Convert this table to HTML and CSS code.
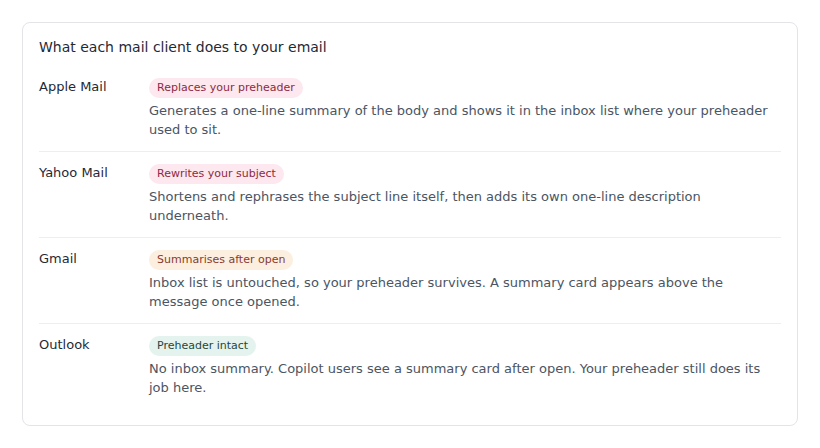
FILE: index.html
```html
<!DOCTYPE html>
<html>
<head>
<meta charset="utf-8">
<link rel="stylesheet" href="styles.css">
</head>
<body>
<div class="card">
  <div class="title">What each mail client does to your email</div>
  <div class="row">
    <div class="client">Apple Mail</div>
    <div class="info">
      <span class="badge pink">Replaces your preheader</span>
      <p class="desc">Generates a one-line summary of the body and shows it in the inbox list where your preheader used to sit.</p>
    </div>
  </div>
  <div class="row">
    <div class="client">Yahoo Mail</div>
    <div class="info">
      <span class="badge pink">Rewrites your subject</span>
      <p class="desc">Shortens and rephrases the subject line itself, then adds its own one-line description underneath.</p>
    </div>
  </div>
  <div class="row">
    <div class="client">Gmail</div>
    <div class="info">
      <span class="badge amber">Summarises after open</span>
      <p class="desc">Inbox list is untouched, so your preheader survives. A summary card appears above the message once opened.</p>
    </div>
  </div>
  <div class="row">
    <div class="client">Outlook</div>
    <div class="info">
      <span class="badge green">Preheader intact</span>
      <p class="desc">No inbox summary. Copilot users see a summary card after open. Your preheader still does its job here.</p>
    </div>
  </div>
</div>
</body>
</html>
```
FILE: styles.css
```css
* { box-sizing: border-box; }
html, body { margin: 0; background: #fff; }
body {
  padding: 22px 22px 0 22px;
  font-family: "DejaVu Sans", sans-serif;
}
.card {
  border: 1px solid #e3e4e8;
  border-radius: 8px;
  padding: 14px 16px 16px 16px;
  width: 776px;
  height: 404px;
}
.title {
  font-size: 14px;
  line-height: 20px;
  color: #1f2937;
  margin-bottom: 9px;
}
.row {
  display: flex;
  padding: 12px 0;
  border-bottom: 1px solid #eceef1;
}
.row:last-child { border-bottom: none; }
.client {
  width: 110px;
  flex: none;
  font-size: 13px;
  line-height: 18px;
  color: #1f2937;
}
.info {
  flex: 1;
  display: flex;
  flex-direction: column;
  align-items: flex-start;
}
.badge {
  display: block;
  font-size: 11px;
  line-height: 20px;
  height: 20px;
  padding: 0 8px;
  border-radius: 10px;
}
.pink { background: #fce8ee; color: #8e2a43; }
.amber { background: #fcefe0; color: #8a3a2e; }
.green { background: #e5f3ee; color: #24483c; }
.desc {
  margin: 3px 0 0 0;
  font-size: 13px;
  line-height: 19px;
  color: #4b5563;
}
```
